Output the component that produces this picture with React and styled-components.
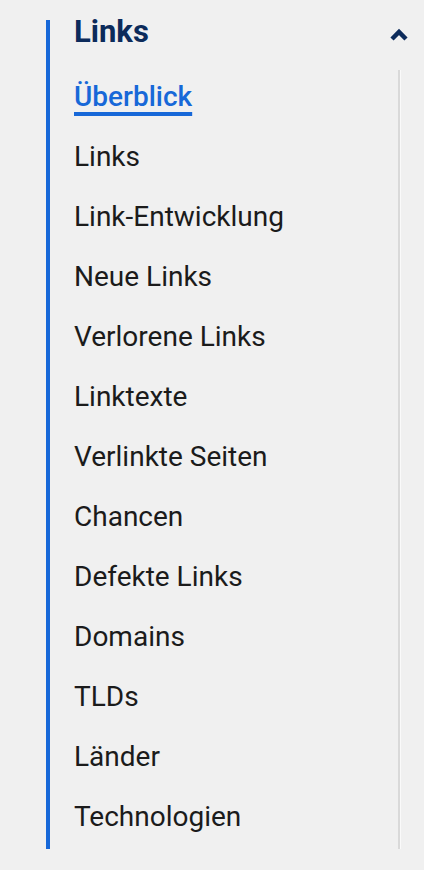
import React from 'react';
import styled, { createGlobalStyle } from 'styled-components';

const GlobalStyle = createGlobalStyle`
  html, body {
    margin: 0;
    padding: 0;
    background: #f0f0f0;
    font-family: Roboto, "Liberation Sans", Arial, sans-serif;
  }
`;

const Nav = styled.nav`
  margin: 20px 0 0 46px;
  height: 829px;
  border-left: 4px solid #1768d8;
  display: flex;
  flex-direction: column;
`;

const Header = styled.div`
  height: 46.5px;
  display: flex;
  align-items: flex-start;
  justify-content: space-between;
  padding: 0 16px 0 24px;
`;

const Title = styled.h2`
  margin: 0;
  font-size: 31px;
  line-height: 23px;
  font-weight: 700;
  color: #0c2b5b;
`;

const Toggle = styled.button`
  border: 0;
  background: none;
  padding: 0;
  margin-top: 9px;
  width: 18px;
  height: 12px;
  display: block;
  cursor: pointer;
  svg { display: block; overflow: visible; }
`;

const List = styled.ul`
  position: relative;
  list-style: none;
  margin: 0 24px 0 0;
  padding: 0 0 0 24px;
  flex: 1;

  &::after {
    content: '';
    position: absolute;
    top: 3.5px;
    bottom: 0;
    right: 0;
    width: 2px;
    background: #d9d9d9;
    box-shadow: 1px 0 0 #fafafa;
  }
`;

const Item = styled.li`
  height: 60px;
  line-height: 60px;
  font-size: 28px;
  font-weight: ${p => (p.$active ? 500 : 400)};
  color: ${p => (p.$active ? '#1768d8' : '#1b1b1b')};
  white-space: nowrap;

  span {
    text-decoration: ${p => (p.$active ? 'underline' : 'none')};
    text-decoration-thickness: 4px;
    text-underline-offset: 6px;
    text-decoration-skip-ink: none;
  }
`;

const items = [
  'Überblick',
  'Links',
  'Link-Entwicklung',
  'Neue Links',
  'Verlorene Links',
  'Linktexte',
  'Verlinkte Seiten',
  'Chancen',
  'Defekte Links',
  'Domains',
  'TLDs',
  'Länder',
  'Technologien',
];

export default function App() {
  return (
    <>
      <GlobalStyle />
      <Nav>
        <Header>
          <Title>Links</Title>
          <Toggle aria-label="Einklappen">
            <svg width="18" height="12" viewBox="0 0 18 12">
              <polyline points="2,10 9,3 16,10" fill="none" stroke="#0c2b5b" strokeWidth="4.5" />
            </svg>
          </Toggle>
        </Header>
        <List>
          {items.map((label, i) => (
            <Item key={label} $active={i === 0}>
              <span>{label}</span>
            </Item>
          ))}
        </List>
      </Nav>
    </>
  );
}
